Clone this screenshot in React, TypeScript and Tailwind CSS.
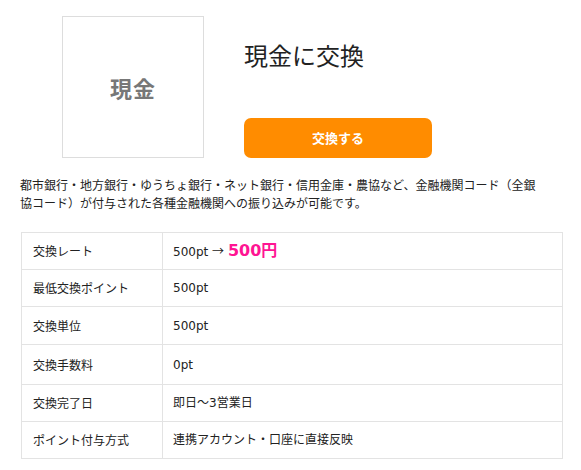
const rows: { label: string; value: React.ReactNode; h: string }[] = [
  {
    label: "交換レート",
    value: (
      <>
        500pt{" "}
        <span style={{ fontFamily: '"Noto Sans CJK JP", sans-serif' }}>→</span>{" "}
        <span className="text-[16px] font-bold text-[#ff1493]">500円</span>
      </>
    ),
    h: "h-[37px]",
  },
  { label: "最低交換ポイント", value: "500pt", h: "h-[37px]" },
  { label: "交換単位", value: "500pt", h: "h-[38px]" },
  { label: "交換手数料", value: "0pt", h: "h-[40px]" },
  { label: "交換完了日", value: "即日〜3営業日", h: "h-[37px]" },
  { label: "ポイント付与方式", value: "連携アカウント・口座に直接反映", h: "h-[37px]" },
];

export default function App() {
  return (
    <div
      className="w-[581px] h-[470px] bg-white pl-[20px] text-[#222]"
      style={{ fontFamily: '"Noto Sans CJK JP", "Noto Sans", sans-serif' }}
    >
      <div className="flex pt-[16px] pl-[42px]">
        <div className="w-[142px] h-[142px] border border-[#dddddd] flex items-center justify-center">
          <span className="text-[22px] font-bold text-[#777] tracking-[1px]">現金</span>
        </div>
        <div className="ml-[40px] w-[188px] flex flex-col">
          <h1 className="mt-[22px] text-[24px] leading-[34px] font-normal text-[#222]">
            現金に交換
          </h1>
          <button className="mt-auto h-[40px] w-[188px] rounded-[7px] bg-[#ff8c00] text-white text-[13px] font-bold">
            交換する
          </button>
        </div>
      </div>

      <p className="mt-[18px] w-[524px] text-[12px] leading-[18px] text-[#222]">
        都市銀行・地方銀行・ゆうちょ銀行・ネット銀行・信用金庫・農協など、金融機関コード（全銀協コード）が付与された各種金融機関への振り込みが可能です。
      </p>

      <table className="mt-[20px] ml-[1px] w-[542px] border-collapse text-[12px]">
        <tbody>
          {rows.map((r) => (
            <tr key={r.label} className={r.h}>
              <td className="w-[141px] border border-[#e3e3e3] pl-[11px] align-middle">
                {r.label}
              </td>
              <td
                className="border border-[#e3e3e3] pl-[10px] align-middle"
                style={{ fontFamily: '"DejaVu Sans", "Noto Sans CJK JP", sans-serif' }}
              >
                {r.value}
              </td>
            </tr>
          ))}
        </tbody>
      </table>
    </div>
  );
}
